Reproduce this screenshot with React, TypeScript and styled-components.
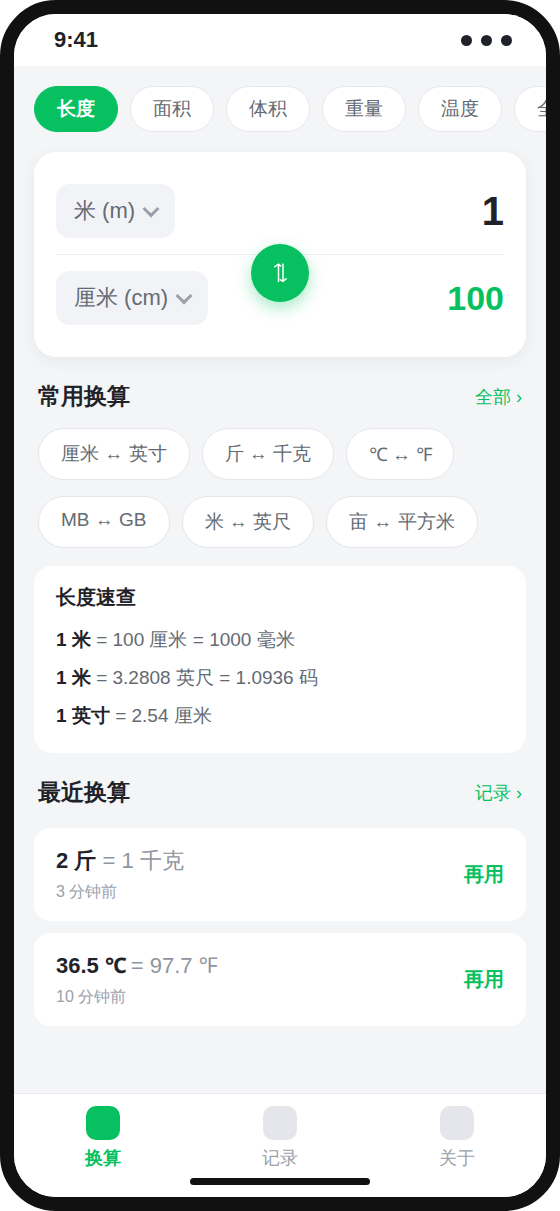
import React from "react";
import styled, { createGlobalStyle, css } from "styled-components";

const color = {
  green: "#07c160",
  ink: "#1f2329",
  text: "#646a73",
  muted: "#8f959e",
  page: "#f4f5f7",
  field: "#f2f3f7",
  line: "#e5e6eb",
  frame: "#111111",
};

const GlobalStyle = createGlobalStyle`
  *, *::before, *::after { box-sizing: border-box; }
  body {
    margin: 0;
    background: #ffffff;
    color: ${color.ink};
    font-family: "Liberation Sans", sans-serif;
  }
`;

const Phone = styled.div`
  display: flex;
  flex-direction: column;
  position: relative;
  width: 560px;
  height: 1211px;
  border: 14px solid ${color.frame};
  border-radius: 56px;
  background: ${color.page};
  overflow: hidden;
`;

const StatusBar = styled.header`
  display: flex;
  flex: none;
  align-items: center;
  justify-content: space-between;
  height: 52px;
  padding: 0 34px 0 40px;
  background: #fff;
  font-size: 22px;
  font-weight: 700;
`;

const Dots = styled.div`
  display: flex;
  gap: 9px;
  padding-top: 1px;
`;

const Dot = styled.span`
  width: 11px;
  height: 11px;
  border-radius: 50%;
  background: ${color.ink};
`;

const Content = styled.main`
  flex: 1;
  min-height: 0;
  padding: 20px 20px 0;
`;

const Tabs = styled.nav`
  display: flex;
  gap: 12px;
  margin-right: -20px;
  overflow: hidden;
`;

const pill = css`
  flex: none;
  border: 1px solid ${color.line};
  background: #fff;
  color: ${color.text};
  font-size: 19px;
  white-space: nowrap;
`;

const Tab = styled.div<{ $active?: boolean }>`
  ${pill}
  height: 46px;
  padding: 0 22px;
  border-radius: 23px;
  line-height: 44px;
  ${(p) =>
    p.$active &&
    css`
      border-color: ${color.green};
      background: ${color.green};
      color: #fff;
      font-weight: 700;
    `}
`;

const Converter = styled.section`
  position: relative;
  margin-top: 20px;
  padding: 16px 22px;
  border-radius: 22px;
  background: #fff;
  box-shadow: 0 4px 16px rgba(31, 35, 41, 0.06);
`;

const UnitRow = styled.div`
  display: flex;
  align-items: center;
  justify-content: space-between;
  padding: 16px 0;

  & + & {
    border-top: 1px solid #eeeff2;
  }
`;

const UnitSelect = styled.div`
  display: flex;
  align-items: center;
  gap: 10px;
  height: 54px;
  padding: 0 18px;
  border-radius: 14px;
  background: ${color.field};
  color: ${color.text};
  font-size: 22px;
`;

const Chevron = styled.span`
  width: 12px;
  height: 12px;
  border-right: 3px solid #9aa1ab;
  border-bottom: 3px solid #9aa1ab;
  transform: translateY(-2px) rotate(45deg);
`;

const Amount = styled.span<{ $result?: boolean }>`
  color: ${(p) => (p.$result ? color.green : color.ink)};
  font-size: ${(p) => (p.$result ? 34 : 40)}px;
  font-weight: 700;
  line-height: 46px;
`;

const SwapButton = styled.div`
  position: absolute;
  top: 92px;
  left: 50%;
  display: flex;
  align-items: center;
  justify-content: center;
  width: 58px;
  height: 58px;
  margin-left: -29px;
  border-radius: 50%;
  background: ${color.green};
  color: #fff;
  box-shadow: 0 6px 16px rgba(7, 193, 96, 0.35);
`;

const SectionHead = styled.div<{ $gap: number }>`
  display: flex;
  align-items: center;
  justify-content: space-between;
  height: 34px;
  margin: 22px 4px ${(p) => p.$gap}px;
`;

const SectionTitle = styled.h2`
  margin: 0;
  font-size: 23px;
  font-weight: 700;
`;

const SectionLink = styled.span`
  padding-top: 2px;
  color: ${color.green};
  font-size: 18px;
`;

const PillList = styled.div`
  display: flex;
  flex-wrap: wrap;
  gap: 16px 12px;
  padding: 0 4px;
`;

const Pill = styled.div`
  ${pill}
  height: 52px;
  padding: 12px 22px;
  border-radius: 26px;
`;

const Degree = styled.span`
  font-family: "Noto Sans", sans-serif;
  font-size: 0.98em;
  letter-spacing: -0.055em;
  line-height: 1.36;
`;

const Reference = styled.section`
  height: 187px;
  margin-top: 18px;
  padding: 17px 22px;
  border-radius: 18px;
  background: #fff;
`;

const ReferenceTitle = styled.h3`
  margin: 0 0 10px;
  font-size: 20px;
  font-weight: 700;
  line-height: 28px;
`;

const ReferenceLine = styled.div`
  color: ${color.text};
  font-size: 19px;
  line-height: 38px;

  b {
    color: ${color.ink};
  }
`;

const History = styled.div`
  display: flex;
  flex-direction: column;
  gap: 12px;
`;

const HistoryItem = styled.article`
  display: flex;
  align-items: center;
  justify-content: space-between;
  height: 93px;
  padding: 0 22px;
  border-radius: 16px;
  background: #fff;
`;

const HistoryValue = styled.div`
  color: ${color.muted};
  font-size: 22px;
  line-height: 32px;

  b {
    color: ${color.ink};
  }

  ${Degree} {
    letter-spacing: -0.09em;
    line-height: 1;
  }
`;

const HistoryTime = styled.div`
  margin-top: 3px;
  color: #9aa1ab;
  font-size: 16px;
  line-height: 24px;
`;

const Reuse = styled.span`
  color: ${color.green};
  font-size: 20px;
  font-weight: 700;
`;

const TabBar = styled.footer`
  display: flex;
  flex: none;
  height: 104px;
  padding-top: 12px;
  border-top: 1px solid #ebecef;
  background: #fff;
`;

const TabBarItem = styled.div<{ $active?: boolean }>`
  display: flex;
  flex: 1;
  flex-direction: column;
  align-items: center;
  gap: 5px;
  color: ${(p) => (p.$active ? color.green : "#9aa1ab")};
  font-size: 18px;
  font-weight: ${(p) => (p.$active ? 700 : 400)};
  line-height: 26px;
`;

const TabBarIcon = styled.span<{ $active?: boolean }>`
  width: 34px;
  height: 34px;
  border-radius: 10px;
  background: ${(p) => (p.$active ? color.green : color.line)};
`;

const HomeIndicator = styled.div`
  position: absolute;
  bottom: 12px;
  left: 50%;
  width: 180px;
  height: 7px;
  margin-left: -90px;
  border-radius: 4px;
  background: ${color.frame};
`;

const categories = ["长度", "面积", "体积", "重量", "温度", "全部"];

const shortcuts = ["厘米 ↔ 英寸", "斤 ↔ 千克", "℃ ↔ ℉", "MB ↔ GB", "米 ↔ 英尺", "亩 ↔ 平方米"];

const lengths = [
  { from: "1 米", to: "= 100 厘米 = 1000 毫米" },
  { from: "1 米", to: "= 3.2808 英尺 = 1.0936 码" },
  { from: "1 英寸", to: "= 2.54 厘米" },
];

const recent = [
  { from: "2 斤", to: "= 1 千克", time: "3 分钟前" },
  { from: "36.5 ℃", to: "= 97.7 ℉", time: "10 分钟前" },
];

const sections = ["换算", "记录", "关于"];

/** Sets the degree signs of a label a little tighter than its other characters. */
function Label({ text }: { text: string }) {
  return (
    <>
      {text
        .split(/([℃℉])/)
        .map((part, i) => (i % 2 ? <Degree key={i}>{part}</Degree> : part))}
    </>
  );
}

function SwapIcon() {
  return (
    <svg width="14" height="20" viewBox="0 0 14 20" fill="none" stroke="currentColor" strokeWidth="1.5">
      <path d="M5.5 19V1.2M1.2 4.2L5.5 1.2L8 3.4" />
      <path d="M10 0.4V18.4M6.6 16.4L10 18.4L13.6 15.4" />
    </svg>
  );
}

export default function App() {
  return (
    <>
      <GlobalStyle />
      <Phone>
        <StatusBar>
          <span>9:41</span>
          <Dots>
            <Dot />
            <Dot />
            <Dot />
          </Dots>
        </StatusBar>

        <Content>
          <Tabs>
            {categories.map((name, i) => (
              <Tab key={name} $active={i === 0}>
                {name}
              </Tab>
            ))}
          </Tabs>

          <Converter>
            <UnitRow>
              <UnitSelect>
                米 (m)
                <Chevron />
              </UnitSelect>
              <Amount>1</Amount>
            </UnitRow>
            <UnitRow>
              <UnitSelect>
                厘米 (cm)
                <Chevron />
              </UnitSelect>
              <Amount $result>100</Amount>
            </UnitRow>
            <SwapButton>
              <SwapIcon />
            </SwapButton>
          </Converter>

          <SectionHead $gap={15}>
            <SectionTitle>常用换算</SectionTitle>
            <SectionLink>全部 ›</SectionLink>
          </SectionHead>
          <PillList>
            {shortcuts.map((name) => (
              <Pill key={name}>
                <Label text={name} />
              </Pill>
            ))}
          </PillList>

          <Reference>
            <ReferenceTitle>长度速查</ReferenceTitle>
            {lengths.map((item) => (
              <ReferenceLine key={item.to}>
                <b>{item.from}</b> {item.to}
              </ReferenceLine>
            ))}
          </Reference>

          <SectionHead $gap={19}>
            <SectionTitle>最近换算</SectionTitle>
            <SectionLink>记录 ›</SectionLink>
          </SectionHead>
          <History>
            {recent.map((item) => (
              <HistoryItem key={item.from}>
                <div>
                  <HistoryValue>
                    <b>
                      <Label text={item.from} />
                    </b>{" "}
                    <Label text={item.to} />
                  </HistoryValue>
                  <HistoryTime>{item.time}</HistoryTime>
                </div>
                <Reuse>再用</Reuse>
              </HistoryItem>
            ))}
          </History>
        </Content>

        <TabBar>
          {sections.map((name, i) => (
            <TabBarItem key={name} $active={i === 0}>
              <TabBarIcon $active={i === 0} />
              {name}
            </TabBarItem>
          ))}
        </TabBar>
        <HomeIndicator />
      </Phone>
    </>
  );
}
